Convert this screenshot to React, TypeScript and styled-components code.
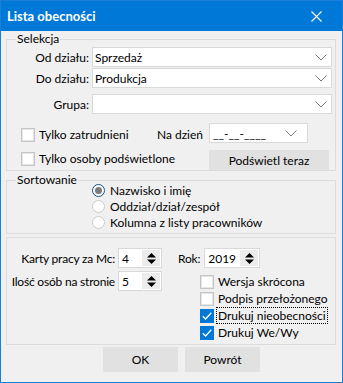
import { createGlobalStyle, styled } from "styled-components";

const GlobalStyle = createGlobalStyle`
  html, body {
    margin: 0;
    padding: 0;
    background: #f0f0f0;
  }
  body {
    font-family: Lato, "Liberation Sans", sans-serif;
    font-size: 12px;
    color: #000;
  }
  * {
    box-sizing: border-box;
  }
`;

const Window = styled.div`
  width: 343px;
  height: 383px;
  border: 1px solid #1a7fd6;
  background: #f0f0f0;
  display: flex;
  flex-direction: column;
`;

const TitleBar = styled.div`
  height: 30px;
  background: #0078d7;
  display: flex;
  align-items: center;
  justify-content: space-between;
  padding: 0 20px 0 6px;
  color: #fff;
`;

const Title = styled.div`
  font-weight: bold;
  font-size: 13px;
`;

const Body = styled.div`
  padding: 8px 6px 0 5px;
  display: flex;
  flex-direction: column;
`;

const Group = styled.div<{ $top?: number; $pad?: string }>`
  position: relative;
  border: 1px solid #dcdcdc;
  margin-top: ${({ $top }) => $top ?? 0}px;
  padding: ${({ $pad }) => $pad ?? "0"};
`;

const Legend = styled.span`
  position: absolute;
  top: -8px;
  left: 9px;
  padding: 0 1px;
  line-height: 14px;
  background: #f0f0f0;
`;

const FieldRow = styled.div<{ $top?: number }>`
  display: flex;
  align-items: center;
  margin-top: ${({ $top }) => $top ?? 0}px;
  padding-right: 3px;
`;

const FieldLabel = styled.div<{ $w: number }>`
  width: ${({ $w }) => $w}px;
  text-align: right;
  margin-right: 3px;
  white-space: nowrap;
`;

const Combo = styled.div`
  flex: 1;
  height: 20px;
  background: #fff;
  border: 1px solid #d9d9d9;
  display: flex;
  align-items: center;
  justify-content: space-between;
  padding: 0 4px 0 2px;
`;

const Chevron = () => (
  <svg width="12" height="7" viewBox="0 0 12 7">
    <path d="M0.5 0.5 L6 6 L11.5 0.5" fill="none" stroke="#7a7a7a" strokeWidth="1" />
  </svg>
);

const CheckRow = styled.div<{ $top: number }>`
  display: flex;
  align-items: flex-start;
  margin-top: ${({ $top }) => $top}px;
  padding-left: 14px;
`;

const LeftCell = styled.div<{ $top: number }>`
  width: 188px;
  display: flex;
  justify-content: space-between;
  align-items: center;
  margin-top: ${({ $top }) => $top}px;
  padding-right: 6px;
`;

const CheckLine = styled.label<{ $h?: number }>`
  display: flex;
  align-items: center;
  height: ${({ $h }) => ($h ? `${$h}px` : "auto")};
  white-space: nowrap;
`;

const Box = styled.span<{ $on?: boolean }>`
  width: 14px;
  height: 14px;
  flex: none;
  background: ${({ $on }) => ($on ? "#0078d7" : "#fff")};
  border: 1px solid ${({ $on }) => ($on ? "#0078d7" : "#c4c4c4")};
  box-shadow: ${({ $on }) => ($on ? "none" : "inset 0 0 0 1px #e6e6e6")};
  display: flex;
  align-items: center;
  justify-content: center;
`;

const CheckText = styled.span<{ $focus?: boolean }>`
  margin-left: 2px;
  padding: 0 1px;
  line-height: 15px;
  border: 1px dotted ${({ $focus }) => ($focus ? "#000" : "transparent")};
`;

const Check = ({ on, focus, children }: { on?: boolean; focus?: boolean; children: string }) => (
  <>
    <Box $on={on}>
      {on && (
        <svg width="10" height="8" viewBox="0 0 10 8">
          <path d="M0.8 4.2 L3.6 7 L9.3 0.8" fill="none" stroke="#fff" strokeWidth="1.3" />
        </svg>
      )}
    </Box>
    <CheckText $focus={focus}>{children}</CheckText>
  </>
);

const DateField = styled.div`
  width: 99px;
  height: 20px;
  background: #fff;
  border: 1px solid #d9d9d9;
  display: flex;
  align-items: center;
  justify-content: space-between;
  padding: 0 10px 0 3px;
`;

const Button = styled.div<{ $w: number; $h: number }>`
  width: ${({ $w }) => $w}px;
  height: ${({ $h }) => $h}px;
  background: #e1e1e1;
  display: flex;
  align-items: center;
  justify-content: center;
`;

const RadioList = styled.div`
  padding: 1px 0 3px 85px;
  display: flex;
  flex-direction: column;
`;

const RadioLine = styled.div`
  height: 16px;
  display: flex;
  align-items: center;
  gap: 5px;
`;

const Circle = styled.span<{ $on?: boolean }>`
  width: 13px;
  height: 13px;
  border-radius: 50%;
  background: #fff;
  border: 1px solid ${({ $on }) => ($on ? "#1b4f86" : "#cacaca")};
  display: flex;
  align-items: center;
  justify-content: center;
  &::after {
    content: "";
    width: 7px;
    height: 7px;
    border-radius: 50%;
    background: ${({ $on }) => ($on ? "#7a7a7a" : "transparent")};
  }
`;

const Options = styled.div`
  display: flex;
  padding: 10px 0 3px 0;
`;

const SpinGrid = styled.div`
  display: grid;
  grid-template-columns: 108px 44px;
  column-gap: 3px;
  row-gap: 3px;
  align-items: center;
  align-content: start;
`;

const RightCol = styled.div`
  margin-left: 16px;
  display: flex;
  flex-direction: column;
`;

const RokRow = styled.div`
  display: flex;
  align-items: center;
  gap: 4px;
`;

const SpinLabel = styled.div`
  text-align: right;
  white-space: nowrap;
  letter-spacing: -0.2px;
`;

const Spin = styled.div<{ $w: number }>`
  width: ${({ $w }) => $w}px;
  height: 20px;
  background: #fff;
  border: 1px solid #d9d9d9;
  display: flex;
  align-items: stretch;
  padding: 1px;
`;

const SpinValue = styled.span`
  flex: 1;
  padding-left: 2px;
  display: flex;
  align-items: center;
`;

const SpinButtons = styled.span`
  width: 18px;
  background: #ececec;
  display: flex;
  align-items: center;
  justify-content: center;
`;

const Arrows = () => (
  <svg width="9" height="13" viewBox="0 0 9 13">
    <path d="M4.5 1 L9 5.5 L0 5.5 Z" fill="#000" />
    <path d="M4.5 12 L9 7.5 L0 7.5 Z" fill="#000" />
  </svg>
);

const CheckList = styled.div`
  margin: 5px 0 0 22px;
  display: flex;
  flex-direction: column;
`;

const Footer = styled.div`
  display: flex;
  gap: 7px;
  padding: 2px 0 0 97px;
`;

const App = () => {
  return (
    <>
      <GlobalStyle />
      <Window>
        <TitleBar>
          <Title>Lista obecności</Title>
          <svg width="11" height="11" viewBox="0 0 11 11">
            <path d="M0.5 0.5 L10.5 10.5 M10.5 0.5 L0.5 10.5" stroke="#fff" strokeWidth="1.1" />
          </svg>
        </TitleBar>
        <Body>
          <Group $pad="7px 0 0 0">
            <Legend>Selekcja</Legend>
            <FieldRow>
              <FieldLabel $w={82}>Od działu:</FieldLabel>
              <Combo>
                <span>Sprzedaż</span>
                <Chevron />
              </Combo>
            </FieldRow>
            <FieldRow $top={1}>
              <FieldLabel $w={82}>Do działu:</FieldLabel>
              <Combo>
                <span>Produkcja</span>
                <Chevron />
              </Combo>
            </FieldRow>
            <FieldRow $top={6}>
              <FieldLabel $w={82}>Grupa:</FieldLabel>
              <Combo>
                <span />
                <Chevron />
              </Combo>
            </FieldRow>
            <CheckRow $top={9}>
              <LeftCell $top={3}>
                <CheckLine>
                  <Check>Tylko zatrudnieni</Check>
                </CheckLine>
                <span>Na dzień</span>
              </LeftCell>
              <DateField>
                <span>__-__-____</span>
                <Chevron />
              </DateField>
            </CheckRow>
            <CheckRow $top={7}>
              <LeftCell $top={0}>
                <CheckLine>
                  <Check>Tylko osoby podświetlone</Check>
                </CheckLine>
              </LeftCell>
              <Button $w={120} $h={20}>Podświetl teraz</Button>
            </CheckRow>
          </Group>

          <Group $top={9}>
            <Legend>Sortowanie</Legend>
            <RadioList>
              <RadioLine>
                <Circle $on />
                <span>Nazwisko i imię</span>
              </RadioLine>
              <RadioLine>
                <Circle />
                <span>Oddział/dział/zespół</span>
              </RadioLine>
              <RadioLine>
                <Circle />
                <span>Kolumna z listy pracowników</span>
              </RadioLine>
            </RadioList>
          </Group>

          <Group $top={3}>
            <Options>
              <SpinGrid>
                <SpinLabel>Karty pracy za Mc:</SpinLabel>
                <Spin $w={44}>
                  <SpinValue>4</SpinValue>
                  <SpinButtons>
                    <Arrows />
                  </SpinButtons>
                </Spin>
                <SpinLabel>Ilość osób na stronie</SpinLabel>
                <Spin $w={44}>
                  <SpinValue>5</SpinValue>
                  <SpinButtons>
                    <Arrows />
                  </SpinButtons>
                </Spin>
              </SpinGrid>
              <RightCol>
                <RokRow>
                  <SpinLabel>Rok:</SpinLabel>
                  <Spin $w={56}>
                    <SpinValue>2019</SpinValue>
                    <SpinButtons>
                      <Arrows />
                    </SpinButtons>
                  </Spin>
                </RokRow>
                <CheckList>
                  <CheckLine $h={17}>
                    <Check>Wersja skrócona</Check>
                  </CheckLine>
                  <CheckLine $h={17}>
                    <Check>Podpis przełożonego</Check>
                  </CheckLine>
                  <CheckLine $h={17}>
                    <Check on focus>
                      Drukuj nieobecności
                    </Check>
                  </CheckLine>
                  <CheckLine $h={17}>
                    <Check on>Drukuj We/Wy</Check>
                  </CheckLine>
                </CheckList>
              </RightCol>
            </Options>
          </Group>

          <Footer>
            <Button $w={75} $h={25}>OK</Button>
            <Button $w={75} $h={25}>Powrót</Button>
          </Footer>
        </Body>
      </Window>
    </>
  );
};

export default App;
